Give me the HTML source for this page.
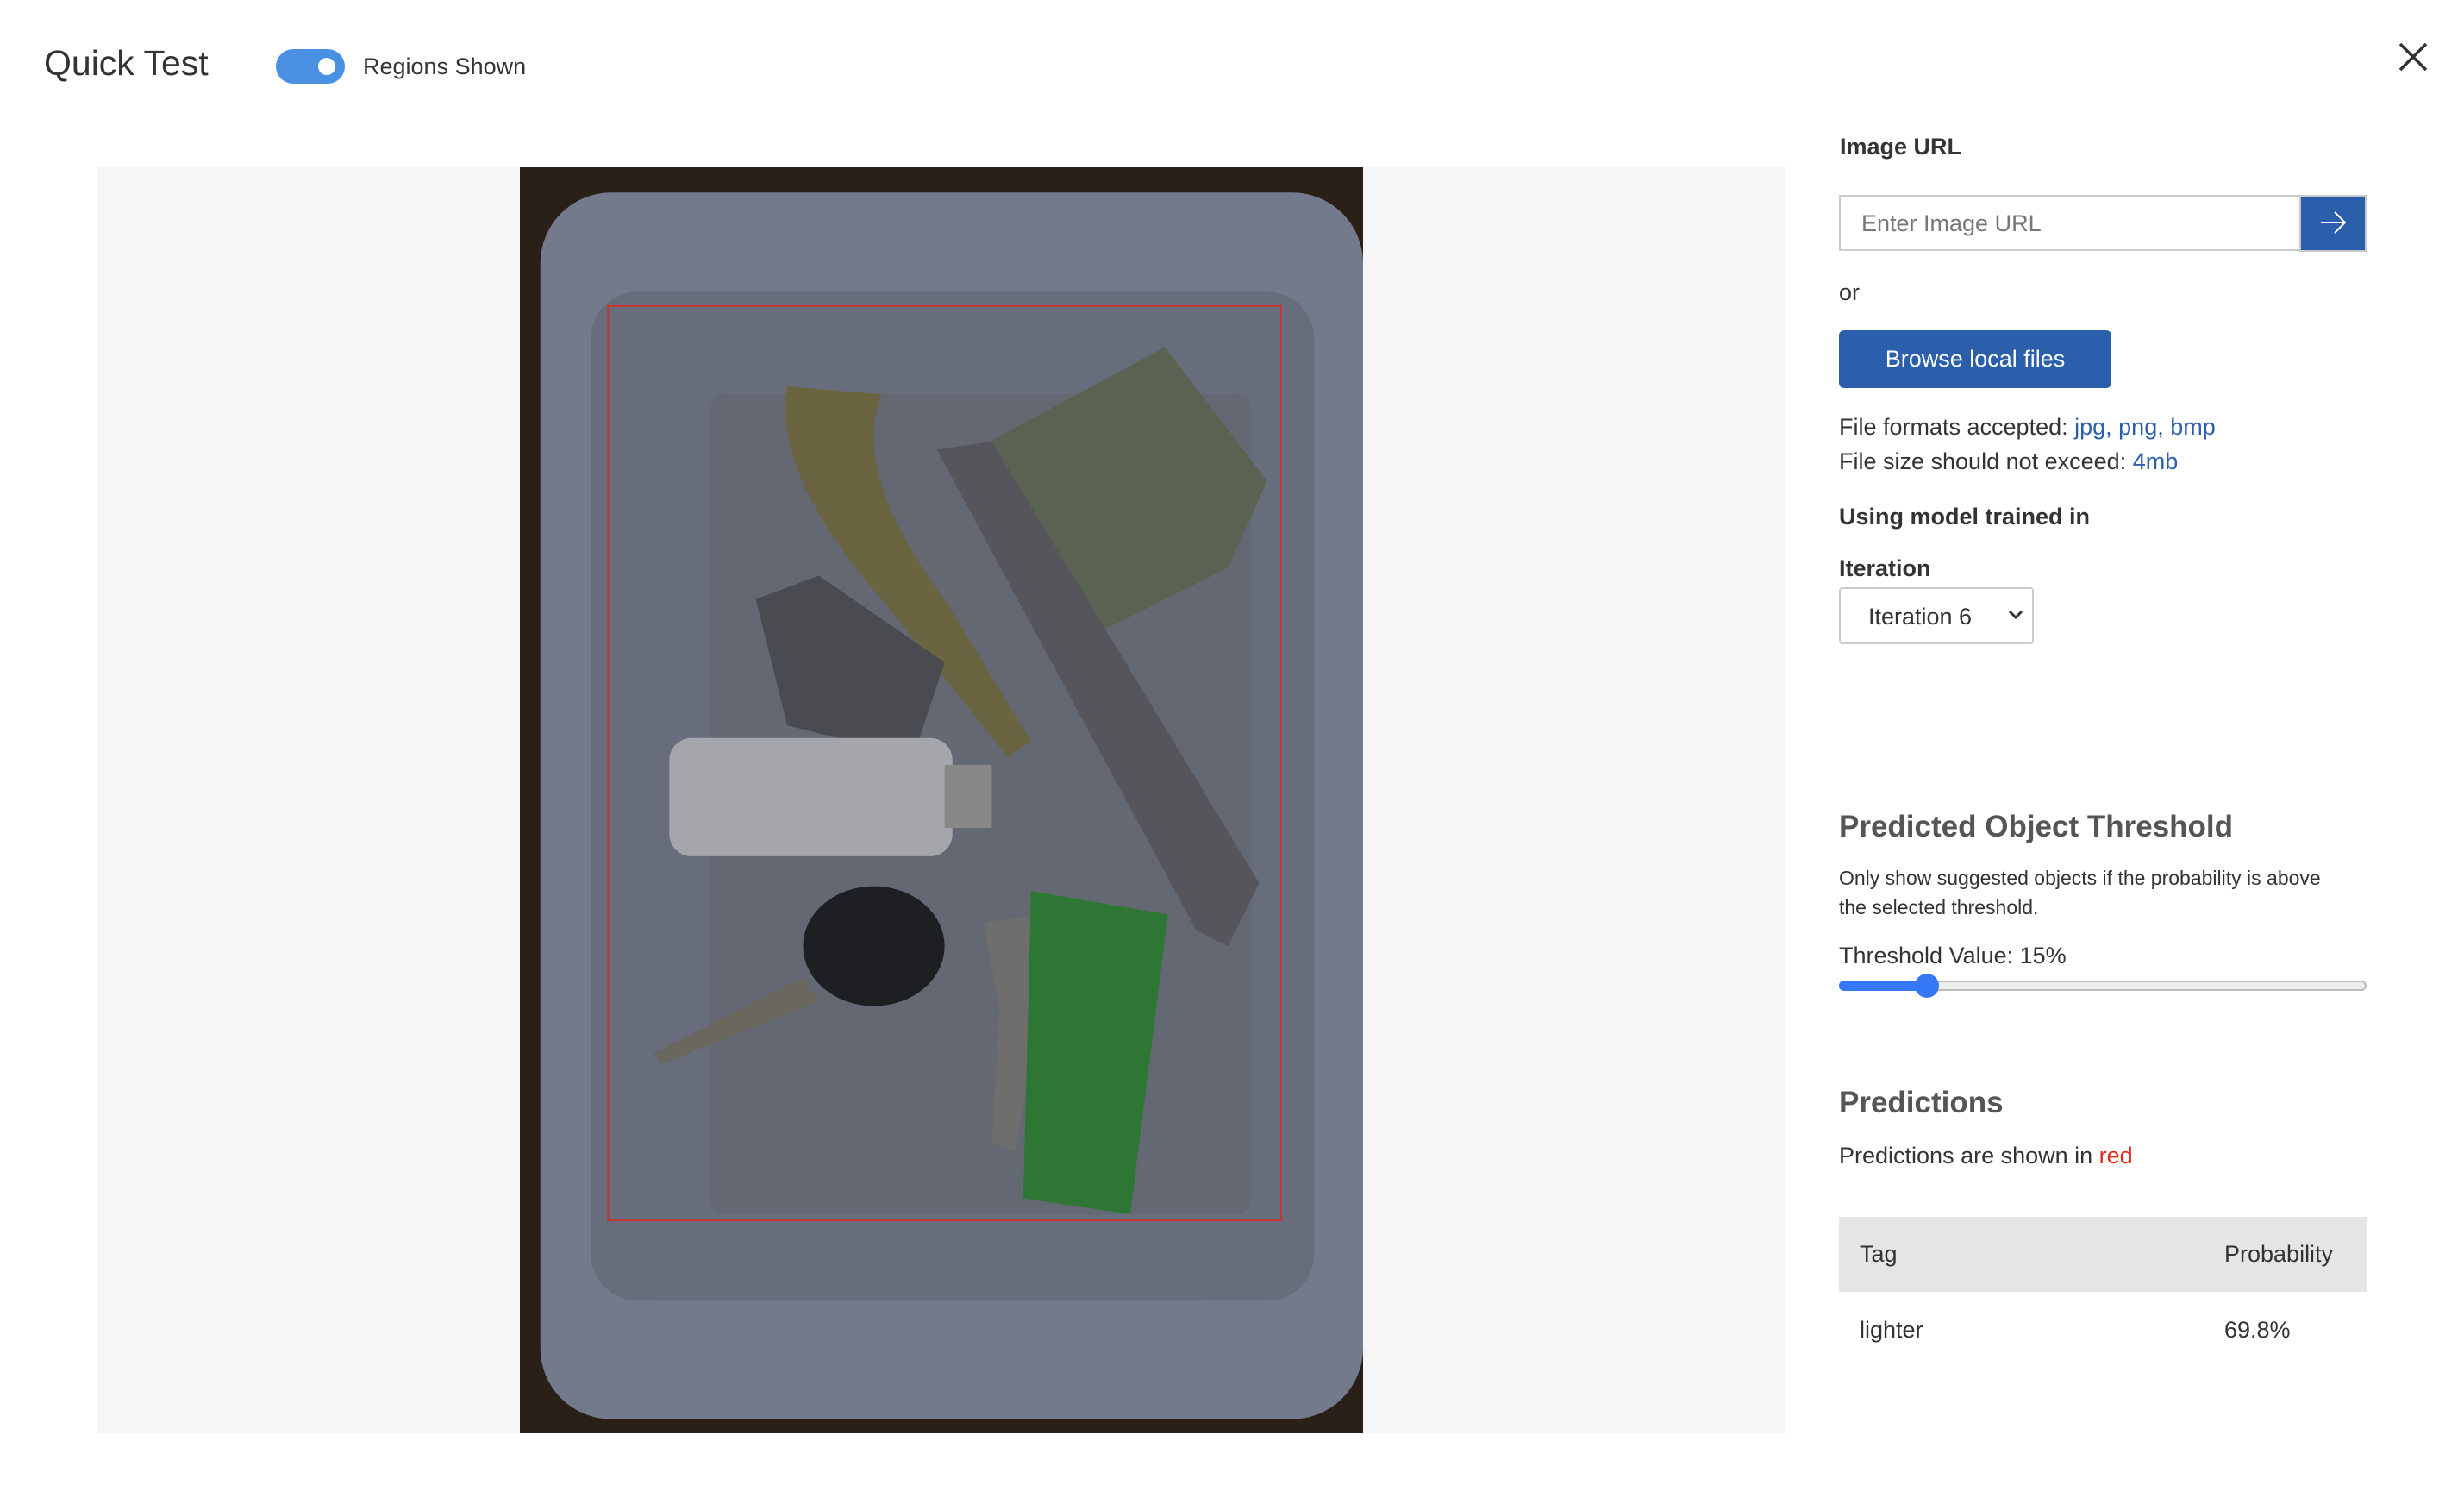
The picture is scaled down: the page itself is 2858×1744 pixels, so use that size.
<!DOCTYPE html>
<html><head><meta charset="utf-8"><style>
*{margin:0;padding:0;box-sizing:border-box}
body{width:2858px;height:1744px;background:#fff;font-family:"Liberation Sans",sans-serif;color:#323130;position:relative;overflow:hidden}
.a{position:absolute;white-space:nowrap}
</style></head><body>
<div class="a" style="left:51px;top:50px;font-size:41px;color:#333">Quick Test</div>
<div class="a" style="left:320px;top:57px;width:80px;height:40px;border-radius:20px;background:#4a90e2"></div>
<div class="a" style="left:369px;top:67px;width:20px;height:20px;border-radius:10px;background:#fff"></div>
<div class="a" style="left:421px;top:62px;font-size:27px;color:#333">Regions Shown</div>
<svg class="a" style="left:2770px;top:40px" width="60" height="55"><path d="M14 11 L44 41 M44 11 L14 41" stroke="#333" stroke-width="3.5"/></svg>

<div class="a" style="left:113px;top:194px;width:1958px;height:1468px;background:#f6f6f6"></div>
<svg class="a" style="left:603px;top:194px" width="978" height="1468" viewBox="330 106 536 803" preserveAspectRatio="none">
<rect x="330" y="106" width="536" height="803" fill="#2a2018"/>
<rect x="343" y="122" width="523" height="778" rx="45" fill="#737a8b"/>
<rect x="375" y="185" width="460" height="640" rx="30" fill="#676d7a"/>
<rect x="450" y="250" width="345" height="520" rx="10" fill="#636873"/>
<path d="M500 245 Q490 300 560 380 L640 480 L655 470 L600 380 Q540 300 560 250 Z" fill="#6a6440"/>
<path d="M610 290 L740 220 L805 305 L780 360 L700 400 L640 360 Z" fill="#5a6252"/>
<path d="M595 285 L630 280 L800 560 L780 600 L760 590 Z" fill="#56555c"/>
<path d="M480 380 L520 365 L600 420 L580 480 L500 460 Z" fill="#4a4b50"/>
<rect x="425" y="468" width="180" height="75" rx="14" fill="#a4a6ac"/>
<rect x="600" y="485" width="30" height="40" fill="#888"/>
<ellipse cx="555" cy="600" rx="45" ry="38" fill="#1e1f23"/>
<path d="M415 668 L510 620 L520 635 L420 675 Z" fill="#6a685e"/>
<path d="M625 585 L665 580 L660 640 L645 730 L630 725 L635 640 Z" fill="#6e6e6c"/>
<path d="M655 565 L742 580 L718 770 L650 760 Z" fill="#2e7634"/>
<rect x="386" y="194" width="428" height="580" fill="none" stroke="#d03030" stroke-width="1"/>
</svg>

<div class="a" style="left:2134px;top:155px;font-size:27px;font-weight:bold;color:#333">Image URL</div>
<div class="a" style="left:2133px;top:226px;width:536px;height:65px;border:2px solid #ccc;background:#fff"></div>
<div class="a" style="left:2159px;top:244px;font-size:27px;color:#777">Enter Image URL</div>
<div class="a" style="left:2667px;top:226px;width:78px;height:66px;background:#2b5fab;border:2px solid #c8c8c8"></div>
<svg class="a" style="left:2688px;top:240px" width="36" height="36"><path d="M4 18 H32 M20 6 L32 18 L20 30" stroke="#fff" stroke-width="2" fill="none"/></svg>
<div class="a" style="left:2133px;top:324px;font-size:27px;color:#333">or</div>
<div class="a" style="left:2133px;top:383px;width:316px;height:67px;background:#2b5fab;border-radius:6px;color:#fff;font-size:27px;text-align:center;line-height:67px">Browse local files</div>
<div class="a" style="left:2133px;top:480px;font-size:27px;color:#333">File formats accepted: <span style="color:#2b5fab">jpg, png, bmp</span></div>
<div class="a" style="left:2133px;top:520px;font-size:27px;color:#333">File size should not exceed: <span style="color:#2b5fab">4mb</span></div>
<div class="a" style="left:2133px;top:584px;font-size:27px;font-weight:bold;color:#333">Using model trained in</div>
<div class="a" style="left:2133px;top:644px;font-size:27px;font-weight:bold;color:#333">Iteration</div>
<div class="a" style="left:2133px;top:681px;width:226px;height:66px;border:2px solid #ccc;border-radius:4px"></div>
<div class="a" style="left:2167px;top:700px;font-size:27px;color:#333">Iteration 6</div>
<svg class="a" style="left:2328px;top:703px" width="20" height="20"><path d="M3 6 L10 13 L17 6" stroke="#333" stroke-width="3" fill="none"/></svg>

<div class="a" style="left:2133px;top:939px;font-size:35px;font-weight:bold;color:#555">Predicted Object Threshold</div>
<div class="a" style="left:2133px;top:1005px;font-size:23px;color:#333">Only show suggested objects if the probability is above</div>
<div class="a" style="left:2133px;top:1039px;font-size:23px;color:#333">the selected threshold.</div>
<div class="a" style="left:2133px;top:1093px;font-size:27px;color:#333">Threshold Value: 15%</div>
<div class="a" style="left:2133px;top:1137px;width:612px;height:12px;border:2px solid #bbb;border-radius:6px;background:#eee"></div>
<div class="a" style="left:2133px;top:1137px;width:104px;height:12px;border-radius:6px;background:#3478f6"></div>
<div class="a" style="left:2221px;top:1129px;width:28px;height:28px;border-radius:14px;background:#3478f6"></div>

<div class="a" style="left:2133px;top:1259px;font-size:35px;font-weight:bold;color:#555">Predictions</div>
<div class="a" style="left:2133px;top:1325px;font-size:27px;color:#333">Predictions are shown in <span style="color:#e3281c">red</span></div>
<div class="a" style="left:2133px;top:1411px;width:612px;height:87px;background:#e5e5e5"></div>
<div class="a" style="left:2157px;top:1439px;font-size:27px;color:#333">Tag</div>
<div class="a" style="left:2580px;top:1439px;font-size:27px;color:#333">Probability</div>
<div class="a" style="left:2157px;top:1527px;font-size:27px;color:#333">lighter</div>
<div class="a" style="left:2580px;top:1527px;font-size:27px;color:#333">69.8%</div>
</body></html>
